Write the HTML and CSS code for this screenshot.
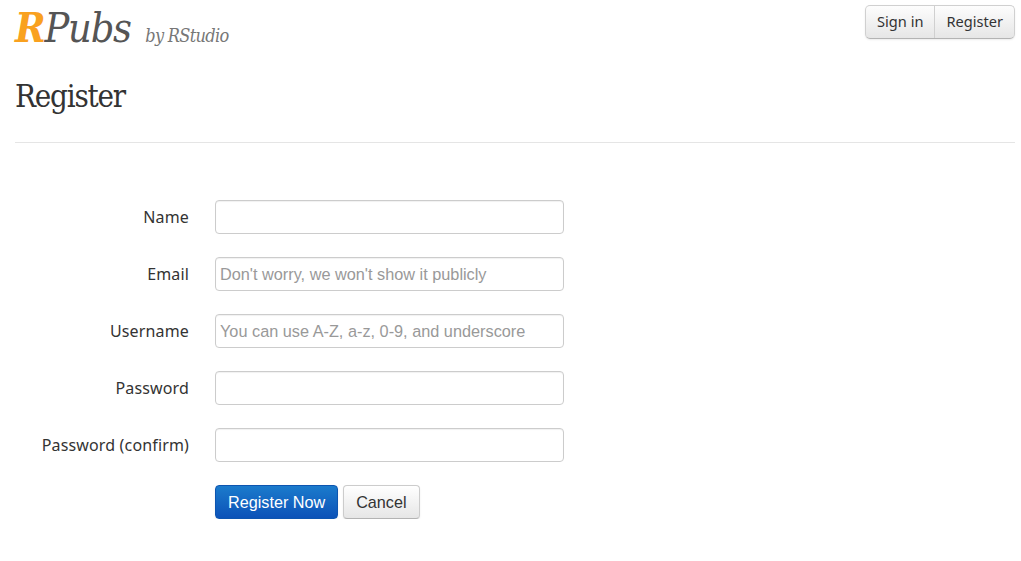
FILE: index.html

```html
<!DOCTYPE html>
<html lang="en">
<head>
  <meta charset="UTF-8" />
  <title>Register - RPubs</title>
  <meta name="viewport" content="width=device-width, initial-scale=1" />
  <link rel="stylesheet" href="styles.css">
</head>
<body>
  <header class="topbar">
    <a class="brand" href="#"><span class="brand-r">R</span>Pubs <small class="brand-by">by RStudio</small></a>
    <nav class="btn-group">
      <a class="group-link" href="#">Sign in</a>
      <a class="group-link" href="#">Register</a>
    </nav>
  </header>

  <h1 class="page-title">Register</h1>

  <form class="register-form">
    <div class="field">
      <label for="name">Name</label>
      <input type="text" id="name">
    </div>
    <div class="field">
      <label for="email">Email</label>
      <input type="text" id="email" placeholder="Don't worry, we won't show it publicly">
    </div>
    <div class="field">
      <label for="username">Username</label>
      <input type="text" id="username" placeholder="You can use A-Z, a-z, 0-9, and underscore">
    </div>
    <div class="field">
      <label for="password">Password</label>
      <input type="password" id="password">
    </div>
    <div class="field">
      <label for="confirm">Password (confirm)</label>
      <input type="password" id="confirm">
    </div>
    <div class="actions">
      <button class="button primary" type="button">Register Now</button>
      <button class="button" type="button">Cancel</button>
    </div>
  </form>
</body>
</html>
```

FILE: styles.css

```css
body {
  margin: 0;
  padding: 0 6px 0 15px;
  background-color: #fff;
  color: #333;
  font-family: "Noto Sans", sans-serif;
}

.topbar {
  display: flex;
  justify-content: space-between;
  align-items: flex-start;
  height: 76px;
}

.brand {
  display: block;
  margin-top: 3px;
  font-family: "DejaVu Serif", serif;
  font-stretch: condensed;
  font-style: italic;
  font-size: 41px;
  line-height: 50px;
  letter-spacing: -1.2px;
  color: #555;
  text-decoration: none;
  white-space: nowrap;
}

.brand-r {
  color: #f9a11f;
  font-weight: bold;
}

.brand-by {
  margin-left: 4px;
  font-size: 18px;
  letter-spacing: -0.7px;
  color: #777;
}

.btn-group {
  display: flex;
  margin-top: 5px;
  height: 32px;
  border: 1px solid #d0d0d0;
  border-bottom-color: #b3b3b3;
  border-radius: 5px;
  background: linear-gradient(#fdfdfd, #e6e6e6);
  box-shadow: 0 1px 2px rgba(0, 0, 0, 0.08);
}

.group-link {
  padding: 0 11px;
  font-size: 14.6px;
  line-height: 31px;
  color: #333;
  text-decoration: none;
}

.group-link + .group-link {
  border-left: 1px solid #d0d0d0;
}

.page-title {
  margin: 0;
  padding: 0 0 23px;
  height: 43px;
  border-bottom: 1px solid #e5e5e5;
  font-family: "DejaVu Serif", serif;
  font-stretch: condensed;
  font-weight: normal;
  font-size: 31px;
  line-height: 40px;
  letter-spacing: -1.2px;
  color: #333;
}

.register-form {
  padding-top: 57px;
}

.field {
  display: flex;
  align-items: center;
  height: 34px;
  margin-bottom: 23px;
}

label {
  width: 174px;
  margin-right: 26px;
  text-align: right;
  font-size: 16px;
  letter-spacing: 0.15px;
  color: #333;
}

input {
  box-sizing: border-box;
  width: 349px;
  height: 34px;
  padding: 0 4px;
  border: 1px solid #ccc;
  border-radius: 4px;
  font-family: "Liberation Sans", sans-serif;
  font-size: 16.3px;
  box-shadow: inset 0 1px 1px rgba(0, 0, 0, 0.06);
}

input::placeholder {
  color: #999;
}

.actions {
  display: flex;
  gap: 5px;
  margin-left: 200px;
}

.button {
  height: 34px;
  padding: 0 12px;
  border: 1px solid #ccc;
  border-bottom-color: #b3b3b3;
  border-radius: 4px;
  background: linear-gradient(#fff, #e6e6e6);
  box-shadow: 0 1px 2px rgba(0, 0, 0, 0.08);
  font-family: "Liberation Sans", sans-serif;
  font-size: 16.2px;
  color: #333;
}

.button.primary {
  border-color: #0d55b0;
  background: linear-gradient(#1b7bcc, #0c52b8);
  color: #fff;
}
```
